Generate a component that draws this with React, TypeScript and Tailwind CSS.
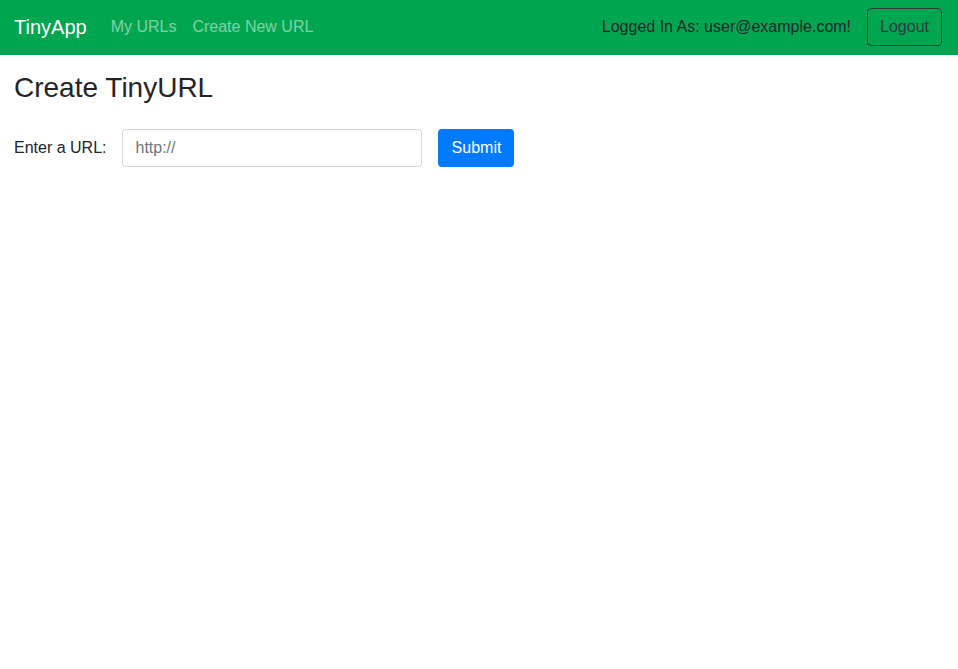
import { useState } from "react";

const font = { fontFamily: '"Liberation Sans", Arial, sans-serif' };

function Navbar() {
  return (
    <nav className="flex h-[55px] items-start justify-between bg-[#00a550] px-[14px] pt-2">
      <div className="flex h-[38px] items-center">
        <a href="#" className="mr-4 text-[20px] leading-[30px] text-white">
          TinyApp
        </a>
        <a href="#" className="px-2 text-base text-white/50">
          My URLs
        </a>
        <a href="#" className="px-2 text-base text-white/50">
          Create New URL
        </a>
      </div>
      <div className="flex h-[38px] items-center gap-4 pr-[2px]">
        <span className="text-base text-[#212529]">Logged In As: user@example.com!</span>
        <button className="h-[38px] rounded border border-[#343a40] px-3 text-base text-[#343a40]">
          Logout
        </button>
      </div>
    </nav>
  );
}

export default function App() {
  const [url, setUrl] = useState("");

  return (
    <div className="min-h-screen bg-white text-[#212529]" style={font}>
      <Navbar />
      <main className="px-[14px]">
        <h3 className="mt-4 mb-2 text-[28px] leading-[1.2] font-medium">Create TinyURL</h3>
        <form className="mt-6 flex items-center" onSubmit={(e) => e.preventDefault()}>
          <label htmlFor="longURL" className="mr-4 text-base">
            Enter a URL:
          </label>
          <input
            id="longURL"
            type="text"
            placeholder="http://"
            value={url}
            onChange={(e) => setUrl(e.target.value)}
            className="mr-4 h-[38px] w-[300px] rounded border border-[#ced4da] px-3 text-base text-[#495057] outline-none placeholder:text-[#6c757d]"
          />
          <button type="submit" className="h-[38px] w-[76px] rounded bg-[#007bff] text-base text-white">
            Submit
          </button>
        </form>
      </main>
    </div>
  );
}
